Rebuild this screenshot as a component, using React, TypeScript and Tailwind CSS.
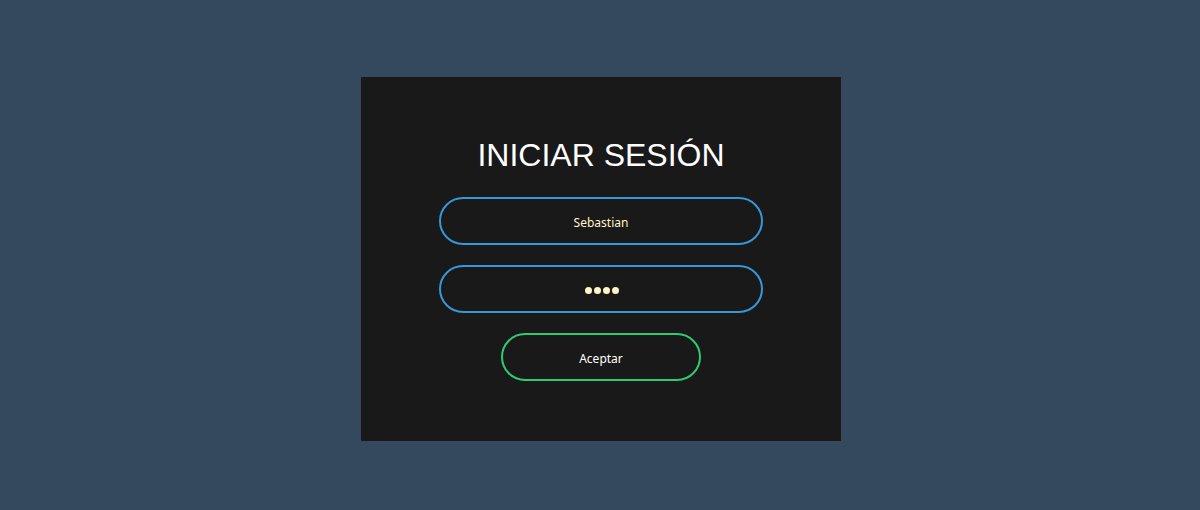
import React from "react";

export default function App() {
  return (
    <div className="w-[1200px] h-[510px] bg-[#34495e] flex justify-center pt-[77px] pl-[2px]">
      <div className="w-[480px] h-[364px] bg-[#191919] flex flex-col items-center pt-[60px]">
        <h1 className="text-[32px] leading-[37px] text-white font-['Liberation_Sans',Arial,sans-serif] mb-[23px]">
          INICIAR SESIÓN
        </h1>
        <div className="w-[324px] h-[48px] rounded-full border-2 border-[#3498db] flex items-center justify-center text-[12px] text-[#fff5c8] font-['Noto_Sans',sans-serif] pt-[3px] mb-[20px]">
          Sebastian
        </div>
        <div className="w-[324px] h-[48px] rounded-full border-2 border-[#3498db] flex items-center justify-center mb-[20px]">
          <div className="flex gap-[2px] pl-[2px] pt-[2px]">
            <span className="w-[7px] h-[7px] rounded-full bg-[#fff5c8]" />
            <span className="w-[7px] h-[7px] rounded-full bg-[#fff5c8]" />
            <span className="w-[7px] h-[7px] rounded-full bg-[#fff5c8]" />
            <span className="w-[7px] h-[7px] rounded-full bg-[#fff5c8]" />
          </div>
        </div>
        <div className="w-[200px] h-[48px] rounded-full border-2 border-[#2ecc71] flex items-center justify-center text-[12px] text-white font-['Noto_Sans',sans-serif] pt-[3px]">
          Aceptar
        </div>
      </div>
    </div>
  );
}
